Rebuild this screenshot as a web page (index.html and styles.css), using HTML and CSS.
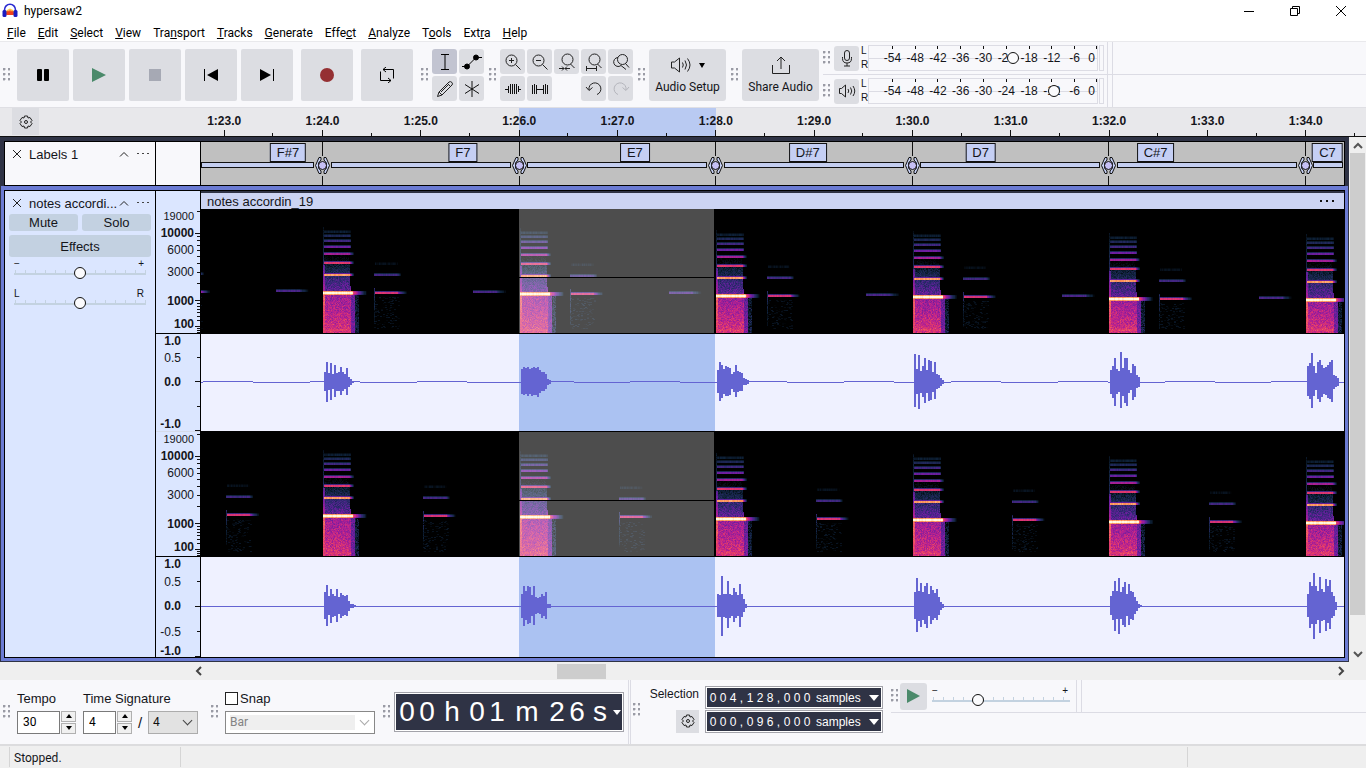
FILE: index.html
```
<!DOCTYPE html>
<html lang="en">
<head>
    <meta charset="UTF-8">
    <meta name="viewport" content="width=device-width, initial-scale=1.0">
    <title>hypersaw2</title>
    <link rel="stylesheet" href="styles.css">
</head>
<body>
    <header class="titlebar">
        <svg class="app-icon" width="16" height="16" viewBox="0 0 16 16">
            <path d="M4 8 L12 8 L12 12 L4 12 Z" fill="#ffb020"/>
            <path d="M4 8 Q8 3 12 8 Z" fill="#ffd860"/>
            <path d="M3 10.500 L5 9 L6 7 L7 9 L8 6 L9 9 L10 7 L11 9 L13 10.500 L11 12 L5 12 Z" fill="#f0401c"/>
            <path d="M2.500 9 V7 A5.500 5.800 0 0 1 13.500 7 V9" fill="none" stroke="#2a2ad0" stroke-width="1.600"/>
            <rect x="0.500" y="7" width="4" height="7" rx="1.500" fill="#1c1cc0"/>
            <rect x="11.500" y="7" width="4" height="7" rx="1.500" fill="#1c1cc0"/>
        </svg>
        <span class="title">hypersaw2</span>
        <div class="window-buttons">
            <button type="button" aria-label="Minimize"><svg width="10" height="10"><path d="M0 5.500 H10" stroke="#000"/></svg></button>
            <button type="button" aria-label="Restore"><svg width="10" height="10" fill="none" stroke="#000"><path d="M0.500 2.500 H7.500 V9.500 H0.500 Z M2.500 2.500 V0.500 H9.500 V7.500 H7.500"/></svg></button>
            <button type="button" aria-label="Close"><svg width="10" height="10"><path d="M0 0 L10 10 M10 0 L0 10" stroke="#000"/></svg></button>
        </div>
    </header>

    <nav class="menubar">
        <a href="#"><u>F</u>ile</a>
        <a href="#"><u>E</u>dit</a>
        <a href="#"><u>S</u>elect</a>
        <a href="#"><u>V</u>iew</a>
        <a href="#">Tra<u>n</u>sport</a>
        <a href="#"><u>T</u>racks</a>
        <a href="#"><u>G</u>enerate</a>
        <a href="#">Effe<u>c</u>t</a>
        <a href="#"><u>A</u>nalyze</a>
        <a href="#">T<u>o</u>ols</a>
        <a href="#">Ext<u>r</u>a</a>
        <a href="#"><u>H</u>elp</a>
    </nav>

    <div class="toolbars">
        <div class="toolbar transport">
            <span class="grip"></span>
            <button type="button" class="big" aria-label="Pause"><svg width="16" height="16"><rect x="2" y="2" width="5" height="12" rx="1"/><rect x="9" y="2" width="5" height="12" rx="1"/></svg></button>
            <button type="button" class="big" aria-label="Play"><svg width="16" height="16"><path d="M1 1 L15 8 L1 15 Z" fill="#4b8a6b"/></svg></button>
            <button type="button" class="big" aria-label="Stop"><svg width="16" height="16"><rect x="2" y="2" width="12" height="12" fill="#a6a9b4"/></svg></button>
            <button type="button" class="big" aria-label="Skip to start"><svg width="16" height="16"><path d="M1.500 2 V14" stroke="#000"/><path d="M15 2 V14 L4 8 Z"/></svg></button>
            <button type="button" class="big" aria-label="Skip to end"><svg width="16" height="16"><path d="M14.500 2 V14" stroke="#000"/><path d="M1 2 V14 L12 8 Z"/></svg></button>
            <button type="button" class="big apart" aria-label="Record"><svg width="16" height="16"><circle cx="8" cy="8" r="7" fill="#953033"/></svg></button>
            <button type="button" class="big apart" aria-label="Loop"><svg width="16" height="16" fill="none" stroke="#000"><path d="M1.500 4.500 V13.500 H12 M4 2.500 H14.500 V11.500 M7 0 L4 2.500 L7 5 M9 11 L12 13.500 L9 16"/></svg></button>
        </div>

        <div class="toolbar">
            <span class="grip"></span>
            <div class="tools">
                <button type="button" class="small active" aria-label="Selection tool"><svg width="20" height="20" fill="none" stroke="#000"><path d="M6 2.500 H14 M6 17.500 H14 M10 2.500 V17.500"/></svg></button>
                <button type="button" class="small" aria-label="Envelope tool"><svg width="22" height="20" stroke="#000"><path d="M1 14.500 H6 L15 5.500 H21" fill="none"/><circle cx="6" cy="14.500" r="2.500"/><circle cx="15" cy="5.500" r="2.500"/></svg></button>
                <button type="button" class="small" aria-label="Draw tool"><svg width="18" height="18" fill="none" stroke="#222"><path d="M1.500 16.500 L3 12 L13 2 Q14.500 1 16 2.500 Q17 4 16 5 L6 15 Z M11.500 3.500 L14.500 6.500 M3 12 L6 15 M5 12 L13 4"/></svg></button>
                <button type="button" class="small" aria-label="Multi tool"><svg width="18" height="18" stroke="#111"><path d="M9 1 V17 M2 4.500 L16 13.500 M16 4.500 L2 13.500"/></svg></button>
            </div>
        </div>

        <div class="toolbar">
            <span class="grip"></span>
            <div class="tools edit">
                <button type="button" class="small" aria-label="Zoom in"><svg width="18" height="18" fill="none" stroke="#222"><circle cx="7.500" cy="7.500" r="5.500"/><path d="M11.500 11.500 L16.500 16.500 M5 7.500 H10 M7.500 5 V10"/></svg></button>
                <button type="button" class="small" aria-label="Zoom out"><svg width="18" height="18" fill="none" stroke="#222"><circle cx="7.500" cy="7.500" r="5.500"/><path d="M11.500 11.500 L16.500 16.500 M5 7.500 H10"/></svg></button>
                <button type="button" class="small" aria-label="Fit selection"><svg width="18" height="20" fill="none" stroke="#222"><circle cx="9.500" cy="7.500" r="5.500"/><path d="M12.500 12 L16.500 16 M1 16.500 H6 M7 16.500 H12 M4 14.500 L6 16.500 L4 18.500 M9 14.500 L7 16.500 L9 18.500"/></svg></button>
                <button type="button" class="small" aria-label="Fit project"><svg width="18" height="20" fill="none" stroke="#222"><circle cx="9.500" cy="7.500" r="5.500"/><path d="M12.500 12 L16.500 16 M1.500 16.500 H11.500 M1.500 14 V19 M11.500 14 V19"/></svg></button>
                <button type="button" class="small" aria-label="Zoom toggle"><svg width="18" height="18" fill="none" stroke="#222"><path d="M6 4.500 A4.500 4.500 0 1 0 9 12.500 L14 16.500"/><circle cx="10.500" cy="6.500" r="5"/><path d="M13.500 10.500 L17 14.500"/></svg></button>
                <button type="button" class="small" aria-label="Trim outside"><svg width="18" height="18" fill="none" stroke="#111"><path d="M1 9.500 H4 M14 9.500 H17 M4.500 6 V13 M6.500 4 V14 M8.500 4 V14 M10.500 4 V14 M12.500 4 V14 M14.500 6 V12"/></svg></button>
                <button type="button" class="small" aria-label="Silence audio"><svg width="18" height="18" fill="none" stroke="#111"><path d="M1.500 5 V14 M3.500 4 V14 M5.500 5 V14 M5.500 9.500 H12.500 M12.500 5 V14 M14.500 4 V14 M16.500 5 V14"/></svg></button>
                <button type="button" class="small after-gap" aria-label="Undo"><svg width="18" height="18" fill="none" stroke="#222"><path d="M4 10 A6 6 0 1 1 12 14.500 M1 7 L4 10.500 L7.500 7.500"/></svg></button>
                <button type="button" class="small" aria-label="Redo"><svg width="18" height="18" fill="none" stroke="#b4b5bc"><path d="M14 10 A6 6 0 1 0 6 14.500 M17 7 L14 10.500 L10.500 7.500"/></svg></button>
            </div>
        </div>

        <div class="toolbar">
            <span class="grip"></span>
            <button type="button" class="labeled">
                <span class="icon-row">
                    <svg width="22" height="18" fill="none" stroke="#222"><path d="M1.500 6 H4.500 L9.500 2 V16 L4.500 12 H1.500 Z M12.500 6.500 Q14 9 12.500 11.500 M15 4.500 Q18 9 15 13.500 M17.500 2.500 Q22.500 9 17.500 15.500"/></svg>
                    <svg width="6" height="6"><path d="M0 1 H6 L3 6 Z"/></svg>
                </span>
                Audio Setup
            </button>
        </div>

        <div class="toolbar share">
            <span class="grip"></span>
            <button type="button" class="labeled">
                <span class="icon-row">
                    <svg width="20" height="20" fill="none" stroke="#222"><path d="M1.500 10 V18.500 H18.500 V10 M10 14 V2 M6 6 L10 2 L14 6"/></svg>
                </span>
                Share Audio
            </button>
        </div>

        <div class="meters">
            <div class="meter-row">
                <span class="grip"></span>
                <button type="button" class="small" aria-label="Record meter"><svg width="14" height="18" fill="none" stroke="#222"><rect x="4.500" y="1.500" width="5" height="10" rx="2.500"/><path d="M2.500 8 V9.500 Q2.500 14 7 14 Q11.500 14 11.500 9.500 V8 M7 14 V17 M4 17 H10"/></svg></button>
                <span class="channels"><span>L</span><span>R</span></span>
                <div class="meter">
                    <ol><li>-54</li><li>-48</li><li>-42</li><li>-36</li><li>-30</li><li>-24</li><li>-18</li><li>-12</li><li>-6</li><li>0</li></ol>
                    <input type="range" min="0" max="100" value="64" aria-label="Recording level">
                </div>
                <span class="clip-light"></span>
            </div>
            <div class="meter-row">
                <span class="grip"></span>
                <button type="button" class="small" aria-label="Playback meter"><svg width="18" height="16" fill="none" stroke="#222"><path d="M1.500 5.500 H3.500 L7.500 2 V14 L3.500 10.500 H1.500 Z M10 6 Q11.500 8 10 10 M12.500 4.500 Q15 8 12.500 11.500 M15 3 Q18.500 8 15 13"/></svg></button>
                <span class="channels"><span>L</span><span>R</span></span>
                <div class="meter">
                    <ol><li>-54</li><li>-48</li><li>-42</li><li>-36</li><li>-30</li><li>-24</li><li>-18</li><li>-12</li><li>-6</li><li>0</li></ol>
                    <input type="range" min="0" max="100" value="83" aria-label="Playback level">
                </div>
                <span class="clip-light"></span>
            </div>
        </div>
    </div>

    <div class="timeline">
        <button type="button" class="gear" aria-label="Timeline options"><svg width="14" height="14" fill="none" stroke="#222"><path d="M5.500 1 H8.500 L9 3 L11 2.500 L13 5.500 L11.500 7 L13 8.500 L11 11.500 L9 11 L8.500 13 H5.500 L5 11 L3 11.500 L1 8.500 L2.500 7 L1 5.500 L3 2.500 L5 3 Z"/><circle cx="7" cy="7" r="1.500"/></svg></button>
        <ol>
            <li>1:23.0</li><li>1:24.0</li><li>1:25.0</li><li class="sel-start">1:26.0</li><li class="sel">1:27.0</li><li class="sel-end">1:28.0</li>
            <li>1:29.0</li><li>1:30.0</li><li>1:31.0</li><li>1:32.0</li><li>1:33.0</li><li>1:34.0</li>
        </ol>
    </div>

    <main class="project">
        <div class="tracks">
            <section class="track label-track">
                <div class="panel">
                    <div class="panel-title">
                        <button type="button" aria-label="Close track"><svg width="10" height="10"><path d="M1 1 L9 9 M9 1 L1 9" stroke="#222"/></svg></button>
                        <span class="name">Labels 1</span>
                        <button type="button" aria-label="Collapse"><svg width="10" height="10" fill="none"><path d="M1 7.500 L5 3.500 L9 7.500" stroke="#222"/></svg></button>
                        <button type="button" aria-label="Track menu"><svg width="12" height="10" fill="#444"><rect x="0" y="4" width="2" height="1"/><rect x="5" y="4" width="2" height="1"/><rect x="10" y="4" width="2" height="1"/></svg></button>
                    </div>
                </div>
                <div class="vruler"></div>
                <div class="label-lane" id="label-lane"></div>
            </section>

            <section class="track audio-track">
                <div class="panel">
                    <div class="panel-title">
                        <button type="button" aria-label="Close track"><svg width="10" height="10"><path d="M1 1 L9 9 M9 1 L1 9" stroke="#222"/></svg></button>
                        <span class="name">notes accordi...</span>
                        <button type="button" aria-label="Collapse"><svg width="10" height="10" fill="none"><path d="M1 7.500 L5 3.500 L9 7.500" stroke="#222"/></svg></button>
                        <button type="button" aria-label="Track menu"><svg width="12" height="10" fill="#444"><rect x="0" y="4" width="2" height="1"/><rect x="5" y="4" width="2" height="1"/><rect x="10" y="4" width="2" height="1"/></svg></button>
                    </div>
                    <div class="panel-buttons">
                        <button type="button">Mute</button>
                        <button type="button">Solo</button>
                        <button type="button" class="effects">Effects</button>
                    </div>
                    <div class="slider">
                        <div class="ends"><span>−</span><span>+</span></div>
                        <input type="range" min="0" max="100" value="50" aria-label="Gain">
                    </div>
                    <div class="slider">
                        <div class="ends"><span>L</span><span>R</span></div>
                        <input type="range" min="0" max="100" value="50" aria-label="Pan">
                    </div>
                </div>
                <div class="vruler">
                    <div class="scale-head"></div>
                    <div class="scale freq">
                        <ol><li>19000</li><li><b>10000</b></li><li>6000</li><li>3000</li><li><b>1000</b></li><li><b>100</b></li></ol>
                        <svg width="5" height="124" stroke="#111"><path d="M2 2.500 H5 M0 24.500 H5 M2 27.500 H5 M2 31.500 H5 M2 36.500 H5 M2 41.500 H5 M2 47.500 H5 M2 54.500 H5 M2 63.500 H5 M2 74.500 H5 M0 91.500 H5 M2 94.500 H5 M2 97.500 H5 M2 100.500 H5 M2 103.500 H5 M2 107.500 H5 M2 111.500 H5 M0 117.500 H5 M2 119.500 H5 M2 121.500 H5 M2 123.500 H5"/></svg>
                    </div>
                    <div class="scale amp">
                        <ol><li><b>1.0</b></li><li>0.5</li><li><b>0.0</b></li><li></li><li><b>-1.0</b></li></ol>
                        <svg width="5" height="97" stroke="#111"><path d="M2 23.500 H5 M0 47.500 H5 M2 72.500 H5 M0 96.500 H5"/></svg>
                    </div>
                    <div class="scale freq">
                        <ol><li>19000</li><li><b>10000</b></li><li>6000</li><li>3000</li><li><b>1000</b></li><li><b>100</b></li></ol>
                        <svg width="5" height="124" stroke="#111"><path d="M2 2.500 H5 M0 24.500 H5 M2 27.500 H5 M2 31.500 H5 M2 36.500 H5 M2 41.500 H5 M2 47.500 H5 M2 54.500 H5 M2 63.500 H5 M2 74.500 H5 M0 91.500 H5 M2 94.500 H5 M2 97.500 H5 M2 100.500 H5 M2 103.500 H5 M2 107.500 H5 M2 111.500 H5 M0 117.500 H5 M2 119.500 H5 M2 121.500 H5 M2 123.500 H5"/></svg>
                    </div>
                    <div class="scale amp tall">
                        <ol><li><b>1.0</b></li><li>0.5</li><li><b>0.0</b></li><li>-0.5</li><li><b>-1.0</b></li></ol>
                        <svg width="5" height="100" stroke="#111"><path d="M2 24.500 H5 M0 49.500 H5 M2 74.500 H5 M0 99.500 H5"/></svg>
                    </div>
                </div>
                <div class="clip">
                    <div class="clip-head"><span>notes accordin_19</span>
                        <button type="button" aria-label="Clip menu"><svg width="16" height="4" fill="#111"><rect x="1" y="1" width="2" height="2"/><rect x="7" y="1" width="2" height="2"/><rect x="13" y="1" width="2" height="2"/></svg></button>
                    </div>
                    <canvas class="spectrum" id="spec-left"></canvas>
                    <canvas class="wave" id="wave-left"></canvas>
                    <canvas class="spectrum" id="spec-right"></canvas>
                    <canvas class="wave tall" id="wave-right"></canvas>
                </div>
            </section>
        </div>
        <div class="vscroll">
            <svg width="10" height="8" fill="none" stroke="#555" stroke-width="2"><path d="M1 6 L5 2 L9 6"/></svg>
            <span class="thumb"></span>
            <svg width="10" height="8" fill="none" stroke="#555" stroke-width="2"><path d="M1 2 L5 6 L9 2"/></svg>
        </div>
    </main>
    <div class="hscroll">
        <svg width="8" height="10" fill="none" stroke="#444" stroke-width="2"><path d="M6 1 L2 5 L6 9"/></svg>
        <div class="rail"><span class="thumb"></span></div>
        <svg width="8" height="10" fill="none" stroke="#444" stroke-width="2"><path d="M2 1 L6 5 L2 9"/></svg>
    </div>

    <div class="bottombars">
        <div class="bar">
            <span class="grip"></span>
            <div class="field tempo">
                <label for="tempo">Tempo</label>
                <div class="spin">
                    <input type="text" id="tempo" value="30">
                    <div class="arrows"><button type="button" aria-label="Tempo up"><svg width="6" height="4"><path d="M0 4 L3 0 L6 4 Z"/></svg></button><button type="button" aria-label="Tempo down"><svg width="6" height="4"><path d="M0 0 L3 4 L6 0 Z"/></svg></button></div>
                </div>
            </div>
            <div class="field">
                <label for="beats">Time Signature</label>
                <div class="spin">
                    <input type="text" id="beats" class="narrow" value="4">
                    <div class="arrows"><button type="button" aria-label="Beats up"><svg width="6" height="4"><path d="M0 4 L3 0 L6 4 Z"/></svg></button><button type="button" aria-label="Beats down"><svg width="6" height="4"><path d="M0 0 L3 4 L6 0 Z"/></svg></button></div>
                    <span class="slash">/</span>
                    <span class="picker"><select aria-label="Beat unit"><option>4</option></select></span>
                </div>
            </div>
        </div>

        <div class="bar snapping">
            <span class="grip"></span>
            <div class="field">
                <label class="snap"><input type="checkbox">Snap</label>
                <span class="picker off"><select class="snap-to" aria-label="Snap to" disabled><option>Bar</option></select></span>
            </div>
        </div>

        <div class="bar">
            <span class="grip"></span>
            <div class="clock">
                <span class="lcd"><i>0</i><i>0</i><em>h</em><i>0</i><i>1</i><em class="wide">m</em><i>2</i><i>6</i><em class="last">s</em></span>
                <svg width="8" height="5"><path d="M0 0 H8 L4 5 Z" fill="#fff"/></svg>
            </div>
        </div>

        <div class="bar selection">
            <span class="grip"></span>
            <div class="selection-side">
                <span>Selection</span>
                <button type="button" class="gear" aria-label="Selection options"><svg width="14" height="14" fill="none" stroke="#222"><path d="M5.500 1 H8.500 L9 3 L11 2.500 L13 5.500 L11.500 7 L13 8.500 L11 11.500 L9 11 L8.500 13 H5.500 L5 11 L3 11.500 L1 8.500 L2.500 7 L1 5.500 L3 2.500 L5 3 Z"/><circle cx="7" cy="7" r="1.500"/></svg></button>
            </div>
            <div class="samples">
                <div class="counter"><i>0</i><i>0</i><i>4</i><s>,</s><i>1</i><i>2</i><i>8</i><s>,</s><i>0</i><i>0</i><i>0</i><span>samples</span><svg width="10" height="6"><path d="M0 0 H10 L5 6 Z" fill="#fff"/></svg></div>
                <div class="counter"><i>0</i><i>0</i><i>0</i><s>,</s><i>0</i><i>9</i><i>6</i><s>,</s><i>0</i><i>0</i><i>0</i><span>samples</span><svg width="10" height="6"><path d="M0 0 H10 L5 6 Z" fill="#fff"/></svg></div>
            </div>
        </div>

        <div class="play-speed">
            <div class="speed-row">
                <span class="grip"></span>
                <button type="button" class="play" aria-label="Play at speed"><svg width="14" height="16"><path d="M0 1 L13 8 L0 15 Z" fill="#4b8a6b"/></svg></button>
                <div class="slider">
                    <div class="ends"><span>−</span><span>+</span></div>
                    <input type="range" min="0" max="100" value="32" aria-label="Playback speed">
                </div>
            </div>
        </div>
    </div>

    <footer class="statusbar">
        <span class="state">Stopped.</span>
        <span class="message"></span>
        <span class="rate"></span>
    </footer>

    <script src="tracks.js"></script>
</body>
</html>
```
FILE: styles.css
```
* {
    box-sizing: border-box;
}
body {
    margin: 0;
    min-height: 100vh;
    display: flex;
    flex-direction: column;
    font-family: "Liberation Sans", Arial, sans-serif;
    font-size: 13px;
    color: #14151a;
    background: #f8f8fb;
}
button {
    margin: 0;
    padding: 0;
    border: none;
    background: #dcdde2;
    color: inherit;
    font: inherit;
    display: flex;
    align-items: center;
    justify-content: center;
}
svg {
    flex: none;
}
ol {
    margin: 0;
    padding: 0;
    list-style: none;
}
i, em, s {
    font-style: normal;
    text-decoration: none;
}

/* title and menu */
.titlebar {
    display: flex;
    align-items: center;
    height: 22px;
    padding: 0 2px;
    background: #fff;
    color: #000;
    font: 12px Roboto, "Open Sans", sans-serif;
}
.title {
    flex: 1;
    padding-left: 6px;
}
.window-buttons {
    display: flex;
}
.window-buttons button {
    width: 46px;
    height: 22px;
    background: none;
}
.menubar {
    display: flex;
    gap: 12px;
    height: 20px;
    padding: 0 7px;
    background: #fff;
    border-bottom: 1px solid #e9e9ec;
    font: 12px/22px Roboto, "Open Sans", sans-serif;
}
.menubar a {
    color: #000;
    text-decoration: none;
}

/* top toolbars */
.toolbars {
    display: flex;
    height: 65px;
    padding-left: 3px;
}
.toolbar {
    display: flex;
    align-items: center;
    padding-top: 1px;
    margin-right: 5px;
}
.grip {
    flex: none;
    width: 7px;
    height: 14px;
    margin-right: 4px;
    background: radial-gradient(circle at 1px 1px, #9a9ba5 1px, transparent 2px) 0 0 / 5px 5px;
}
.transport {
    gap: 4px;
    margin-right: 8px;
}
.transport .grip {
    margin-right: 3px;
}
.share {
    margin-right: 4px;
}
.big {
    width: 52px;
    height: 52px;
    border-radius: 2px;
}
.apart {
    margin-left: 4px;
}
.tools {
    display: grid;
    grid-template-columns: repeat(2, 25px);
    gap: 2px;
}
.edit {
    grid-template-columns: repeat(5, 25px);
}
.small {
    width: 25px;
    height: 25px;
    border-radius: 3px;
}
.active {
    background: #c2c4d1;
}
.after-gap {
    grid-column: 4;
}
.labeled {
    width: 77px;
    height: 52px;
    border-radius: 3px;
    flex-direction: column;
    gap: 4px;
    font: 12px/16px Roboto, "Open Sans", sans-serif;
    white-space: nowrap;
}
.icon-row {
    display: flex;
    align-items: center;
    gap: 7px;
    height: 20px;
}
.meters {
    flex: 1;
}
.meter-row {
    display: flex;
    align-items: center;
    height: 33px;
    border-bottom: 1px solid #dcdce4;
}
.channels {
    display: flex;
    flex-direction: column;
    justify-content: space-between;
    width: 9px;
    height: 26px;
    padding-left: 2px;
    font: 10px/12px "Liberation Sans", Arial, sans-serif;
}
.meter {
    position: relative;
    width: 230px;
    height: 26px;
    border: 1px solid #dcdce4;
    background: linear-gradient(#dcdce4, #dcdce4) 0 12px / 100% 1px no-repeat;
}
.meter ol {
    display: flex;
    padding-left: 12px;
    font: 12px/24px "Liberation Sans", Arial, sans-serif;
}
.meter li {
    flex: 1;
    text-align: center;
    background: linear-gradient(#111, #111) center top / 1px 3px no-repeat;
}
.meter li:last-child {
    flex: none;
    width: 11px;
    text-align: center;
    background-position: right top;
}
.meter input {
    position: absolute;
    left: 0;
    top: 5px;
    width: 100%;
    margin: 0;
}
.clip-light {
    width: 5px;
    height: 26px;
    margin-left: 1px;
    border: 1px solid #dcdce4;
}
.meter-row::after {
    content: "";
    width: 4px;
    height: 32px;
    margin-left: 3px;
    border: 1px solid #dcdce4;
    border-width: 0 1px;
}
input[type="range"] {
    appearance: none;
    height: 14px;
    background: none;
}
input[type="range"]::-webkit-slider-thumb {
    appearance: none;
    width: 12px;
    height: 12px;
    border: 1px solid #111;
    border-radius: 50%;
    background: #fbfbfd;
}

/* timeline ruler */
.timeline {
    display: flex;
    height: 30px;
    padding: 0 11px 0 12px;
    background: #e8e8eb;
    border-top: 1px solid #dfdfe4;
    border-bottom: 1px solid #111;
}
.gear {
    width: 27px;
    height: 27px;
    background: #dcdde2;
}
.timeline ol {
    flex: 1;
    display: flex;
    margin-left: 136px;
}
.timeline li {
    flex: 1;
    text-align: center;
    font-weight: bold;
    font-size: 12px;
    line-height: 26px;
    background:
        linear-gradient(#111, #111) 50% 100% / 1px 6px no-repeat,
        linear-gradient(#111, #111) 100% 100% / 1px 3px no-repeat;
}
.timeline .sel-start {
    background:
        linear-gradient(#111, #111) 50% 100% / 1px 6px no-repeat,
        linear-gradient(#111, #111) 100% 100% / 1px 3px no-repeat,
        linear-gradient(90deg, transparent 50%, #b9caf2 50%);
}
.timeline .sel {
    background-color: #b9caf2;
}
.timeline .sel-end {
    background:
        linear-gradient(#111, #111) 50% 100% / 1px 6px no-repeat,
        linear-gradient(#111, #111) 100% 100% / 1px 3px no-repeat,
        linear-gradient(90deg, #b9caf2 50%, transparent 50%);
}

/* tracks */
.project {
    flex: 1;
    display: flex;
    background: #2f3345;
}
.tracks {
    flex: 1;
    min-width: 0;
    padding-top: 4px;
}
.track {
    display: flex;
    margin: 0 4px;
    border: 1px solid #000;
}
.label-track {
    height: 45px;
    background: #f8f8fb;
}
.audio-track {
    margin: 0 1px;
    border: 3px solid #6b7bd3;
    border-width: 4px 3px 3px;
    background: #dbe6ff;
}
.panel {
    width: 151px;
    border-right: 1px solid #000;
}
.vruler {
    width: 45px;
    border-right: 1px solid #000;
}
.audio-track .panel {
    width: 152px;
    border-left: 1px solid #000;
    border-top: 1px solid #000;
    border-bottom: 1px solid #000;
}
.audio-track .vruler {
    border-top: 1px solid #000;
    border-bottom: 1px solid #000;
}
.panel-title {
    display: flex;
    align-items: center;
    height: 24px;
    padding: 0 6px 0 7px;
}
.panel-title button {
    background: none;
}
.panel-title .name {
    flex: 1;
    margin-left: 7px;
    white-space: nowrap;
}
.panel-title .name + button {
    margin-right: 8px;
}
.panel-buttons {
    display: grid;
    grid-template-columns: 1fr 1fr;
    gap: 4px;
    padding: 0 4px;
    margin-top: -1px;
}
.panel-buttons button {
    height: 17px;
    border-radius: 3px;
    background: #c3d1e1;
}
.panel-buttons .effects {
    grid-column: 1 / 3;
    height: 22px;
}
.panel .slider {
    margin: 2px 9px 0;
}
.panel .slider + .slider {
    margin-top: 9px;
}
.ends {
    display: flex;
    justify-content: space-between;
    padding: 0 2px 0 0;
    font-size: 10px;
    line-height: 9px;
}
.slider input {
    display: block;
    width: 100%;
    margin: -2px 0 0;
    background:
        linear-gradient(#c3d2e0, #c3d2e0) 0 7px / 100% 2px no-repeat,
        repeating-linear-gradient(90deg, #c3d2e0 0 1px, transparent 1px 10px) 1px 4px / 100% 3px no-repeat;
}
.scale-head {
    height: 18px;
}
.scale {
    display: flex;
    justify-content: flex-end;
    border-bottom: 1px solid #000;
}
.scale ol {
    display: grid;
    flex: 1;
    align-items: center;
    text-align: right;
    font-size: 12px;
    line-height: 12px;
}
.freq {
    height: 125px;
}
.freq ol {
    grid-template-rows: 14px 20px 14px 30px 28px 18px;
    padding-right: 1px;
}
.freq li:first-child {
    font-size: 11px;
}
.amp {
    height: 98px;
    border-bottom-color: #d5dbe9;
}
.amp ol {
    grid-template-rows: 14px 20px 28px 20px 15px;
    padding-right: 14px;
}
.amp.tall {
    height: 100px;
    border: none;
}
.amp.tall ol {
    grid-template-rows: 14px 22px 26px 26px 12px;
}
.clip {
    flex: 1;
    min-width: 0;
    display: flex;
    flex-direction: column;
    border: 1px solid #000;
    border-left: none;
}
.clip-head {
    display: flex;
    align-items: center;
    justify-content: space-between;
    height: 18px;
    padding: 0 9px 0 6px;
    border-top: 2px solid #2f3345;
    background: #ccd4f3;
}
.clip-head button {
    background: none;
}
.spectrum {
    width: 100%;
    height: 125px;
}
.wave {
    width: 100%;
    height: 98px;
}
.wave.tall {
    height: 100px;
}
.label-lane {
    position: relative;
    flex: 1;
    overflow: hidden;
    background: #c0c0c0;
}
.region {
    position: absolute;
    top: 20px;
    height: 6px;
    border: 1px solid #111;
    background: #c4cef0;
}
.boundary {
    position: absolute;
    top: 0;
    width: 16px;
    margin-left: -8px;
}
.tag {
    position: absolute;
    top: 1px;
    height: 19px;
    padding: 0 6px;
    border: 1px solid #111;
    background: #c5cff4;
    line-height: 17px;
    transform: translateX(-50%);
}
.vscroll {
    display: flex;
    flex-direction: column;
    align-items: center;
    justify-content: space-between;
    width: 17px;
    padding: 5px 0 4px;
    background: #efefef;
}
.vscroll .thumb {
    flex: 1;
    width: 15px;
    margin: 3px 0 35px;
    background: #cdcdcd;
}
.hscroll {
    display: flex;
    align-items: center;
    height: 18px;
    padding: 0 21px 0 195px;
    background: #efefef;
}
.rail {
    flex: 1;
    height: 15px;
    padding-left: 3px;
}
.rail .thumb {
    display: block;
    width: 49px;
    height: 15px;
    margin-left: 31%;
    background: #cdcdcd;
}

/* bottom toolbars */
.bottombars {
    display: flex;
    height: 64px;
    padding-left: 3px;
    background: #f8f8fb;
}
.bar {
    display: flex;
    align-items: center;
}
.field {
    display: flex;
    flex-direction: column;
    gap: 4px;
    margin-right: 13px;
}
.tempo {
    margin-left: 3px;
    margin-right: 7px;
}
.field label {
    line-height: 16px;
}
.spin {
    display: flex;
    align-items: center;
}
.spin input {
    width: 43px;
    height: 23px;
    padding: 0 5px;
    border: 1px solid #7a7a7a;
    background: #fff;
    font: 12px Roboto, "Open Sans", sans-serif;
}
.spin .narrow {
    width: 33px;
}
.arrows {
    display: flex;
    flex-direction: column;
    gap: 1px;
    margin-left: 1px;
}
.arrows button {
    width: 15px;
    height: 11px;
    border: 1px solid #b0b0b0;
    background: #f0f0f0;
}
.slash {
    width: 16px;
    text-align: center;
    font-size: 15px;
}
select {
    display: block;
    appearance: none;
    width: 50px;
    height: 23px;
    padding: 0 4px;
    border: 1px solid #acacac;
    border-radius: 0;
    color: #111;
    background: #e2e2e2;
    font: 12px Roboto, "Open Sans", sans-serif;
}
.picker {
    position: relative;
}
.picker::after {
    content: "";
    position: absolute;
    right: 7px;
    top: 6px;
    width: 6px;
    height: 6px;
    border: solid #444;
    border-width: 0 1px 1px 0;
    transform: rotate(45deg);
}
.picker.off::after {
    border-color: #aaa;
}
.snap {
    display: flex;
    align-items: center;
    gap: 2px;
}
.snap input {
    appearance: none;
    width: 13px;
    height: 13px;
    margin: 0;
    border: 1px solid #222;
    background: #fff;
}
.snap-to {
    width: 150px;
    background: linear-gradient(#efefef, #efefef) 4px 3px / 125px 15px no-repeat, #fff;
    border-color: #888;
    color: #838383;
    opacity: 1;
}
.snapping .field {
    margin-right: 8px;
    margin-left: 3px;
}
.clock {
    display: flex;
    align-items: center;
    width: 230px;
    height: 40px;
    padding-left: 2px;
    border: 1px solid #a3a3aa;
    outline: 1px solid #fff;
    outline-offset: -2px;
    background: #2f3345;
    color: #fff;
}
.lcd {
    display: flex;
    font-size: 28px;
    line-height: 38px;
}
.lcd i {
    width: 20px;
    text-align: center;
}
.lcd em {
    width: 30px;
    text-align: center;
}
.lcd .wide {
    width: 40px;
}
.lcd .last {
    width: 26px;
}
.selection {
    margin-left: 4px;
    padding: 0 0 5px 1px;
    border-left: 1px solid #dcdce4;
}
.selection::before {
    content: "";
    height: 64px;
    margin: 0 2px -5px 0;
    border-left: 1px solid #dcdce4;
}
.selection-side {
    display: flex;
    flex-direction: column;
    align-items: flex-end;
    gap: 9px;
    width: 55px;
    margin-right: 6px;
    font-size: 12px;
}
.selection-side .gear {
    width: 23px;
    height: 23px;
}
.samples {
    display: flex;
    flex-direction: column;
    gap: 1px;
}
.counter {
    display: flex;
    align-items: center;
    width: 178px;
    height: 23px;
    padding: 0 3px 0 2px;
    border: 1px solid #a3a3aa;
    outline: 1px solid #fff;
    outline-offset: -2px;
    background: #2f3345;
    color: #fff;
    font-size: 12px;
}
.counter i {
    width: 10px;
    text-align: center;
}
.counter s {
    width: 7px;
    text-align: center;
}
.counter span {
    flex: 1;
    padding-left: 4px;
}
.play-speed {
    flex: 1;
    margin-left: 8px;
}
.speed-row {
    display: flex;
    align-items: center;
    height: 33px;
    border-bottom: 1px solid #dcdce4;
}
.speed-row .grip {
    margin-right: 2px;
}
.play {
    width: 27px;
    height: 27px;
    border-radius: 3px;
}
.speed-row .slider {
    width: 138px;
    margin-left: 5px;
}
.speed-row::after {
    content: "";
    width: 4px;
    height: 32px;
    margin-left: 6px;
    border: 1px solid #dcdce4;
    border-width: 0 1px;
}

/* status bar */
.statusbar {
    display: flex;
    height: 24px;
    padding: 1px 0 1px 9px;
    border-top: 2px solid #dcdcde;
    background: #efefef;
    font: 12px/22px Roboto, "Open Sans", sans-serif;
}
.statusbar span {
    border-left: 1px solid #d5d5d5;
}
.state {
    width: 171px;
    padding-left: 4px;
}
.message {
    flex: 1;
}
.rate {
    width: 179px;
}
```
FILE: tracks.js
```
// visible part of the project, in seconds
var viewStart = 82.764;
var viewLength = 11.634;
var selStart = 86;
var selEnd = 88;

// label text, and where its box is centred
var labels = [
    ["F#7", 83.65], ["F7", 85.43], ["E7", 87.18], ["D#7", 88.94],
    ["D7", 90.7], ["C#7", 92.48], ["C7", 94.23]
];
var boundaries = [84, 86, 88, 90, 92, 94];

function percent(t) {
    return (t - viewStart) / viewLength * 100;
}

function drawLabels() {
    var html = "";
    var edges = [viewStart - 0.08].concat(boundaries, [viewStart + viewLength + 0.08]);
    for (var i = 0; i < edges.length - 1; i++) {
        var a = percent(edges[i] + 0.085);
        var b = percent(edges[i + 1] - 0.085);
        html += `<div class="region" style="left:${a}%;width:${b - a}%"></div>`;
    }
    boundaries.forEach(function (t) {
        html += `<svg class="boundary" style="left:${percent(t)}%" width="16" height="44" viewBox="0 0 16 44">
            <path d="M8.5 0 V14 M8.5 34 V44" stroke="#111"/>
            <path d="M7 15.500 H5 L1.500 23.500 L5 31.500 H7 V29 L4.500 26 V21 L7 18 Z M10 15.500 H12 L15.500 23.500 L12 31.500 H10 V29 L12.500 26 V21 L10 18 Z" fill="#c5cff4" stroke="#111"/>
            <circle cx="8.5" cy="23.500" r="4" fill="#c6c0f5" stroke="#111"/>
        </svg>`;
    });
    labels.forEach(function (l) {
        html += `<div class="tag" style="left:${percent(l[1])}%">${l[0]}</div>`;
    });
    document.getElementById("label-lane").innerHTML = html;
}

var palette = [
    [0, 0, 0, 0], [0.15, 14, 34, 58], [0.3, 46, 42, 112], [0.45, 106, 30, 160],
    [0.6, 180, 32, 146], [0.72, 230, 60, 104], [0.85, 251, 146, 88], [1, 255, 250, 225]
];

function heat(v) {
    v = Math.max(0, Math.min(1, v));
    for (var i = 1; i < palette.length; i++) {
        if (v <= palette[i][0]) {
            var p = palette[i - 1], q = palette[i];
            var k = (v - p[0]) / (q[0] - p[0]);
            return "rgb(" + [1, 2, 3].map(function (c) { return Math.round(p[c] + (q[c] - p[c]) * k); }).join(",") + ")";
        }
    }
}

var seed = 7;
function rnd() {
    seed = (seed * 16807) % 2147483647;
    return seed / 2147483647;
}

function setup(id) {
    var canvas = document.getElementById(id);
    canvas.width = canvas.clientWidth;
    canvas.height = canvas.clientHeight;
    return canvas.getContext("2d");
}

// grainy block, level going from top to bottom
function noise(ctx, x, y, w, h, top, bottom, grain) {
    for (var j = 0; j < h; j++) {
        var level = top + (bottom - top) * j / h;
        for (var i = 0; i < w; i++) {
            ctx.fillStyle = heat(level + grain * (rnd() + rnd() - 1));
            ctx.fillRect(x + i, y + j, 1, 1);
        }
    }
}

// one partial: two bright rows, fading at the end
function partial(ctx, x, y, w, level, fade) {
    for (var i = 0; i < w + fade; i++) {
        var v = i < w ? level : level * (1 - (i - w) / fade) * 0.75;
        v += (rnd() - 0.5) * 0.06;
        ctx.fillStyle = heat(v);
        ctx.fillRect(x + i, y, 1, 2);
        ctx.fillStyle = heat(v * 0.5);
        ctx.fillRect(x + i, y - 1, 1, 1);
        if (level > 0.9) {
            ctx.fillStyle = heat(v * 0.86);
            ctx.fillRect(x + i, y - 1, 1, 1);
            ctx.fillRect(x + i, y + 2, 1, 1);
        }
    }
}

var offsets = [19, 31, 40, 47, 53, 58, 62];
var levels = [0.86, 0.7, 0.56, 0.45, 0.34, 0.22, 0.12];

function burst(ctx, x, f, h) {
    noise(ctx, x, f, 28, h - f, 0.54, 0.68, 0.12);
    noise(ctx, x + 28, f, 4, h - f, 0.42, 0.48, 0.1);
    noise(ctx, x + 32, f + 2, 4, h - f - 2, 0.1, 0.16, 0.16);
    noise(ctx, x, f - 17, 27, 17, 0.3, 0.44, 0.12);
    noise(ctx, x, f - 29, 27, 12, 0.12, 0.26, 0.1);
    noise(ctx, x, f - 38, 26, 9, 0, 0.08, 0.06);
    noise(ctx, x, f - 66, 1, 40, 0.08, 0.25, 0.05);
    noise(ctx, x, f - 28, 2, 28, 0.4, 0.6, 0.05);
    noise(ctx, x, f, 2, h - f, 0.78, 0.7, 0.06);
    noise(ctx, x + 27, f - 7, 1, 7, 0.4, 0.6, 0.05);
    noise(ctx, x, h - 4, 28, 2, 0.7, 0.72, 0.08);
    offsets.forEach(function (o, i) {
        partial(ctx, x + 1, f - o, 26, levels[i], i < 3 ? 4 : 1);
    });
    partial(ctx, x, f - 1, 30, 1, 14);
}

function echo(ctx, x, f, level, h) {
    partial(ctx, x, f - 1, 24, level, 9);
    if (level > 0.5) {
        partial(ctx, x, f - 19, 24, 0.34, 3);
        partial(ctx, x + 1, f - 30, 20, 0.06, 3);
        noise(ctx, x, f - 5, 1, 35, 0.26, 0.05, 0.08);
        for (var i = 0; i < 130; i++) {
            ctx.fillStyle = heat(rnd() * 0.1);
            ctx.fillRect(x + Math.floor(rnd() * 25), f + 4 + Math.floor(rnd() * (h - f - 8)), 2, 1);
        }
    }
}

function drawSpectrum(id, echoDelay) {
    var ctx = setup(id);
    var w = ctx.canvas.width, h = ctx.canvas.height - 1;
    function px(t) {
        return Math.round((t - viewStart) / viewLength * w);
    }
    ctx.fillStyle = "#000";
    ctx.fillRect(0, 0, w, h + 1);
    for (var n = -1; n < 6; n++) {
        var t = 84 + n * 2;
        var f = 84 + Math.round(n * 1.4);
        if (echoDelay < 1) {
            echo(ctx, px(t + 0.52), f, 0.68, h);
            echo(ctx, px(t + 1.53), f - 1, 0.36, h);
        } else {
            echo(ctx, px(t + 1.02), f, 0.68, h);
        }
        if (n >= 0) {
            burst(ctx, px(t) + 1, f, h);
        }
    }
    var a = px(selStart), b = px(selEnd) - 1;
    ctx.fillStyle = "rgba(255,255,255,0.3)";
    ctx.fillRect(a, 0, b - a, h);
    ctx.fillStyle = "#000";
    ctx.fillRect(a, 68, b - a, 1);
    ctx.fillRect(b, 0, 1, h);
    ctx.fillRect(0, h, w, 1);
}

// peak heights of each note, two pixels apart
var leftPeaks = [
    [10, 20, 9, 19, 8, 17, 9, 10, 15, 10, 8, 14, 5, 3, 1],
    [13, 15, 14, 15, 13, 14, 15, 14, 15, 12, 10, 10, 8, 3, 2],
    [12, 20, 17, 13, 16, 15, 14, 8, 10, 17, 11, 10, 9, 4, 3, 2],
    [28, 13, 27, 11, 16, 24, 12, 22, 21, 10, 20, 8, 7, 4, 2],
    [12, 16, 24, 13, 11, 30, 14, 24, 24, 12, 9, 18, 16, 7, 5],
    [16, 19, 29, 16, 9, 20, 22, 17, 14, 15, 17, 20, 22, 7, 6, 4]
];
var rightPeaks = [
    [14, 21, 10, 17, 12, 10, 17, 9, 13, 11, 10, 11, 5, 2, 2, 1],
    [12, 20, 15, 20, 19, 11, 20, 9, 8, 9, 12, 10, 14, 2, 2],
    [12, 11, 30, 12, 12, 25, 12, 11, 18, 14, 11, 22, 12, 7, 2],
    [14, 28, 15, 23, 14, 20, 23, 12, 20, 16, 13, 17, 9, 4, 2],
    [10, 15, 25, 15, 28, 14, 19, 24, 12, 22, 15, 14, 9, 5, 2, 1],
    [12, 24, 20, 33, 20, 15, 29, 17, 14, 27, 20, 26, 14, 10, 4]
];

function drawWave(id, peaks, wobble) {
    var ctx = setup(id);
    var w = ctx.canvas.width, h = ctx.canvas.height;
    var mid = Math.floor(h / 2) - 1;
    function px(t) {
        return Math.round((t - viewStart) / viewLength * w);
    }
    ctx.fillStyle = "#eff1ff";
    ctx.fillRect(0, 0, w, h);
    ctx.fillStyle = "#abc2f2";
    ctx.fillRect(px(selStart), 0, px(selEnd) - px(selStart), h);
    ctx.fillStyle = "#6464d2";
    for (var x = 0; x < w; x++) {
        ctx.fillRect(x, mid - (wobble && Math.sin(x / 17) > 0.1 ? 1 : 0), 1, 1);
    }
    peaks.forEach(function (list, n) {
        var x0 = px(84 + n * 2) + 2;
        list.forEach(function (p, i) {
            var down = Math.round(p * (0.85 + 0.15 * rnd()));
            ctx.fillRect(x0 + i * 2, mid - p, 2, p + down);
        });
    });
    if (wobble) {
        ctx.fillStyle = "#000";
        ctx.fillRect(0, h - 1, w, 1);
    }
}

function draw() {
    seed = 7;
    drawSpectrum("spec-left", 0.5);
    drawWave("wave-left", leftPeaks, true);
    drawSpectrum("spec-right", 1);
    drawWave("wave-right", rightPeaks, false);
}

drawLabels();
draw();
window.addEventListener("resize", draw);
```
